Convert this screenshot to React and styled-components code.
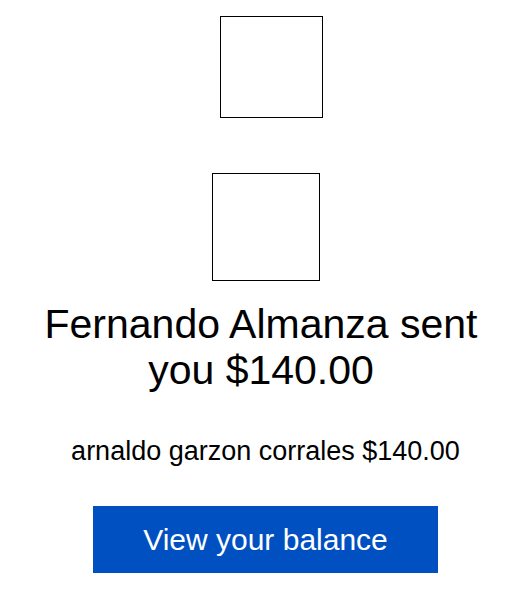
import React from 'react'
import styled, { createGlobalStyle } from 'styled-components'

const GlobalStyle = createGlobalStyle`
    html, body {
        margin: 0;
        padding: 0;
        background: #fff;
    }
    body {
        font-family: "Liberation Sans", Arial, sans-serif;
        color: #000;
    }
`

const Page = styled.div`
    width: 521px;
    min-height: 605px;
    box-sizing: border-box;
    padding: 16px 0 0 10px;
    display: flex;
    flex-direction: column;
    align-items: center;
`

const ImageBox = styled.div`
    width: ${p => p.w}px;
    height: ${p => p.h}px;
    border: 1px solid #000;
    margin-left: ${p => p.shift || 0}px;
    margin-bottom: ${p => p.gap || 0}px;
`

const Heading = styled.h1`
    margin: 0 0 0 -9px;
    width: 456px;
    font-size: 41px;
    line-height: 46px;
    font-weight: 400;
    text-align: center;
`

const Sender = styled.p`
    margin: 43px 0 0;
    font-size: 27px;
    line-height: 31px;
    text-align: center;
`

const Button = styled.a`
    margin-top: 39px;
    width: 345px;
    height: 67px;
    background: #0050c1;
    color: #fff;
    font-size: 30px;
    display: flex;
    align-items: center;
    justify-content: center;
    text-decoration: none;
`

export default function App() {
    return (
        <>
            <GlobalStyle />
            <Page>
                <ImageBox w={101} h={100} shift={11} gap={55} />
                <ImageBox w={106} h={106} gap={20} />
                <Heading>Fernando Almanza sent you $140.00</Heading>
                <Sender>arnaldo garzon corrales $140.00</Sender>
                <Button href="#">View your balance</Button>
            </Page>
        </>
    )
}
